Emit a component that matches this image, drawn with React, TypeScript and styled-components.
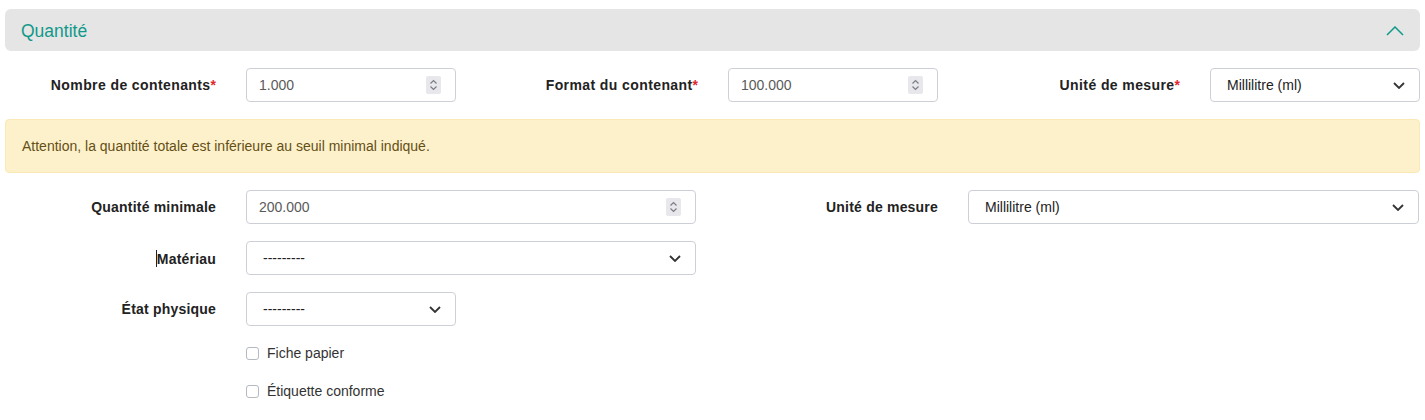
import React from "react";
import styled, { createGlobalStyle } from "styled-components";

const GlobalStyle = createGlobalStyle`
  body {
    margin: 0;
    background: #fff;
    font-family: "Liberation Sans", Arial, sans-serif;
    font-size: 14px;
    color: #222;
  }
`;

const Page = styled.div`
  padding: 9px 5px 0 5px;
`;

const Header = styled.div`
  height: 42px;
  background: #e5e5e5;
  border-radius: 6px;
  display: flex;
  align-items: center;
  justify-content: space-between;
  padding: 2px 16px 0 16px;
  box-sizing: border-box;
`;

const Title = styled.h2`
  margin: 0;
  font-size: 17.5px;
  font-weight: 400;
  color: #10998a;
`;

const Row = styled.div<{ $cols: string }>`
  display: grid;
  grid-template-columns: ${(p) => p.$cols};
  align-items: center;
  height: 34px;
  margin-top: 17px;
`;

const Label = styled.label<{ $wide?: boolean }>`
  font-weight: 700;
  font-size: 14px;
  color: #222;
  text-align: right;
  padding-right: 30px;
  white-space: nowrap;
  letter-spacing: ${(p) => (p.$wide ? "0.4px" : "0.2px")};
`;

const Required = styled.span`
  color: #e0282e;
  letter-spacing: 0;
`;

const Caret = styled.span`
  display: inline-block;
  width: 1px;
  height: 17px;
  background: #222;
  vertical-align: -3px;
`;

const Box = styled.div`
  height: 34px;
  box-sizing: border-box;
  border: 1px solid #ccd0d6;
  border-radius: 4px;
  background: #fff;
  display: flex;
  align-items: center;
  justify-content: space-between;
`;

const NumberBox = styled(Box)`
  padding: 0 14px 0 12px;
`;

const SelectBox = styled(Box)`
  padding: 0 14px 0 16px;
`;

const Value = styled.span<{ $muted?: boolean }>`
  font-size: 14px;
  color: ${(p) => (p.$muted ? "#5a5a5a" : "#222")};
`;

const Spinner = styled.span`
  width: 15px;
  height: 18px;
  background: #e8e8ec;
  border-radius: 2px;
  display: flex;
  align-items: center;
  justify-content: center;
`;

const Alert = styled.div`
  margin-top: 17px;
  height: 54px;
  box-sizing: border-box;
  background: #fdf1cc;
  border: 1px solid #fbe9b5;
  border-radius: 4px;
  display: flex;
  align-items: center;
  padding: 0 16px;
  color: #654f14;
  font-size: 14px;
`;

const CheckRow = styled.label<{ $top: number }>`
  display: flex;
  align-items: center;
  gap: 8px;
  margin-left: 241px;
  font-size: 14px;
  color: #333;
  margin-top: ${(p) => p.$top}px;
`;

const Check = styled.span`
  width: 13px;
  height: 13px;
  box-sizing: border-box;
  border: 1px solid #b5b9c0;
  border-radius: 3px;
  background: #fff;
`;

const SpinIcon = () => (
  <svg width="9" height="12" viewBox="0 0 9 12" fill="none" stroke="#7a7d85" strokeWidth="1.2">
    <path d="M1.5 4.5 L4.5 1.5 L7.5 4.5" />
    <path d="M1.5 7.5 L4.5 10.5 L7.5 7.5" />
  </svg>
);

const ChevronDown = () => (
  <svg width="12" height="7" viewBox="0 0 12 7" fill="none" stroke="#333" strokeWidth="1.8">
    <path d="M1 1 L6 6 L11 1" />
  </svg>
);

const ChevronUp = () => (
  <svg width="18" height="10" viewBox="0 0 18 10" fill="none" stroke="#10998a" strokeWidth="1.5">
    <path d="M1 9 L9 1 L17 9" />
  </svg>
);

const NumberField = ({ value }: { value: string }) => (
  <NumberBox>
    <Value $muted>{value}</Value>
    <Spinner>
      <SpinIcon />
    </Spinner>
  </NumberBox>
);

const SelectField = ({ value }: { value: string }) => (
  <SelectBox>
    <Value>{value}</Value>
    <ChevronDown />
  </SelectBox>
);

const App = () => (
  <>
    <GlobalStyle />
    <Page>
      <Header>
        <Title>Quantité</Title>
        <ChevronUp />
      </Header>

      <Row $cols="241px 210px 272px 210px 272px 210px">
        <Label $wide>
          Nombre de contenants<Required>*</Required>
        </Label>
        <NumberField value="1.000" />
        <Label $wide>
          Format du contenant<Required>*</Required>
        </Label>
        <NumberField value="100.000" />
        <Label $wide>
          Unité de mesure<Required>*</Required>
        </Label>
        <SelectField value="Millilitre (ml)" />
      </Row>

      <Alert>Attention, la quantité totale est inférieure au seuil minimal indiqué.</Alert>

      <Row $cols="241px 450px 272px 451px">
        <Label>Quantité minimale</Label>
        <NumberField value="200.000" />
        <Label>Unité de mesure</Label>
        <SelectField value="Millilitre (ml)" />
      </Row>

      <Row $cols="241px 450px">
        <Label>
          <Caret />
          Matériau
        </Label>
        <SelectField value="---------" />
      </Row>

      <Row $cols="241px 210px">
        <Label>État physique</Label>
        <SelectField value="---------" />
      </Row>

      <CheckRow $top={19}>
        <Check />
        Fiche papier
      </CheckRow>
      <CheckRow $top={22}>
        <Check />
        Étiquette conforme
      </CheckRow>
    </Page>
  </>
);

export default App;
